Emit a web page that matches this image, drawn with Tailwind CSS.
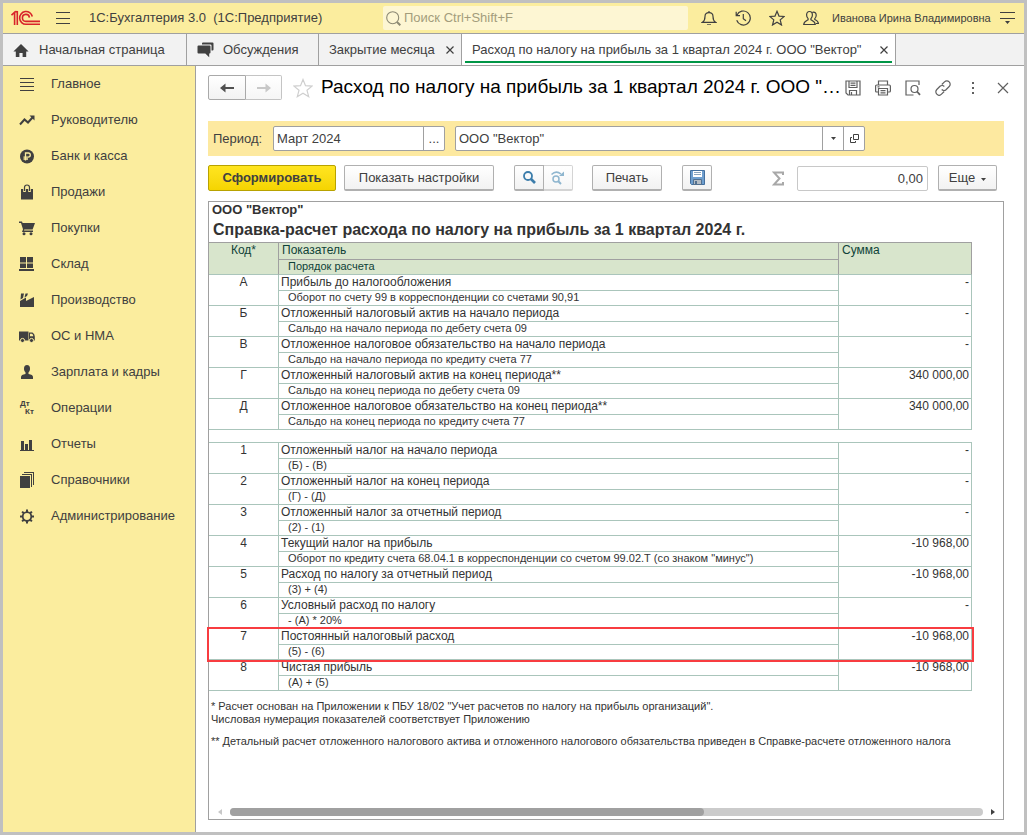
<!DOCTYPE html>
<html lang="ru">
<head>
<meta charset="utf-8">
<meta name="viewport" content="width=device-width, initial-scale=1">
<title>1С:Бухгалтерия 3.0</title>
<script src="https://cdn.jsdelivr.net/npm/@tailwindcss/browser@4"></script>
</head>
<body class="flex min-h-screen flex-col border-3 border-[#c0c0c0] bg-white font-['Liberation_Sans',Arial,sans-serif] text-[13px] text-[#404040]">

<header class="flex h-[31px] shrink-0 items-center border-b border-[#a0a0a0] bg-[#fbed9e]">
  <svg class="ml-2 h-[16px] w-[30px] shrink-0" viewBox="0 0 30 16" fill="none" stroke="#d8232a" stroke-width="1.6" role="img" aria-label="1С">
    <path d="M0.5 5.2L3.6 2.400V15M6.300 1V15M3.200 2.200L6.300 1.400" />
    <path d="M21.300 6.500A6.400 6.400 0 1 0 15 14.300H29" />
    <path d="M18.400 7.600A3.500 3.500 0 1 0 15 11.400H29" />
  </svg>
  <button type="button" aria-label="Меню" class="ml-[15px] flex h-[12px] w-[14px] flex-col justify-between">
    <span class="h-px w-full bg-[#404040]"></span><span class="h-px w-full bg-[#404040]"></span><span class="h-px w-full bg-[#404040]"></span>
  </button>
  <div class="ml-[19px] w-[294px] whitespace-pre">1С:Бухгалтерия 3.0  (1С:Предприятие)</div>
  <label class="flex h-6 flex-1 items-center rounded-xs bg-[#fdf6d3] pl-[3px]">
    <svg class="h-[15px] w-[15px]" viewBox="0 0 15 15" fill="none" stroke="#8c8974"><circle cx="6.7" cy="6.7" r="6" stroke-width="1.1"/><path d="M11 11l3.3 3.3" stroke-width="2"/></svg>
    <input type="search" aria-label="Поиск" placeholder="Поиск Ctrl+Shift+F" class="ml-[3px] min-w-0 flex-1 bg-transparent outline-none placeholder:text-[#a39d7c]">
  </label>
  <div class="ml-[13px] flex items-center gap-[18px]">
    <button type="button" aria-label="Уведомления"><svg class="block h-4 w-4" viewBox="0 0 16 16" fill="none" stroke="#404040" stroke-width="1.2"><path d="M1.5 12.3C3.5 11 4 9.500 4 6.500C4 4 5.500 2.600 8 2.600S12 4 12 6.500C12 9.500 12.500 11 14.500 12.300Z"/><path d="M8 1V2.600" /><path d="M6 14.300H10V15H6Z" fill="#404040" stroke="none"/></svg></button>
    <button type="button" aria-label="История"><svg class="block h-4 w-4" viewBox="0 0 16 16" fill="none" stroke="#404040" stroke-width="1.2"><path d="M1.900 5.200A7 7 0 1 1 1.700 10.300M1.200 1.800V5.600H5M8.300 4V8.600L11 10.800"/></svg></button>
    <button type="button" aria-label="Избранное"><svg class="block h-4 w-4" viewBox="0 0 16 16" fill="none" stroke="#404040" stroke-width="1.200"><path d="M8 1.300L10 6.100L15.200 6.500L11.200 9.900L12.500 15L8 12.200L3.500 15L4.800 9.900L0.800 6.500L6 6.100Z"/></svg></button>
    <button type="button" aria-label="Пользователь"><svg class="block h-4 w-4" viewBox="0 0 16 16" fill="none" stroke="#404040" stroke-width="1.200"><path d="M6.500 1.500C4.500 1.500 3.600 3.100 3.600 5C3.600 6.700 4.400 8 5.100 8.700V9.800C3.500 10.700 1 11.300 0.700 14.500H12.300C12 11.300 9.500 10.700 7.900 9.800V8.700C8.700 8 9.400 6.700 9.400 5C9.400 3.100 8.500 1.500 6.500 1.500ZM9.500 2.300C12 1.700 13.200 3.200 13.200 5.200C13.200 6.700 12.500 8 11.800 8.600V9.500C13.500 10.200 15.300 11 15.400 13.500H13"/></svg></button>
  </div>
  <span class="ml-[13px] w-[154px] whitespace-nowrap text-[11px]">Иванова Ирина Владимировна</span>
  <button type="button" aria-label="Настройки" class="ml-[14px] mr-[9px]"><svg class="block h-[14px] w-[15px]" viewBox="0 0 15 14" fill="#404040"><path d="M0 1h15v1H0zM0 7h15v1H0zM5 10h5L7.500 13z"/></svg></button>
</header>

<nav aria-label="Вкладки" class="flex h-8 shrink-0 border-b border-[#a0a0a0] bg-[#f2f2f2]">
  <a href="#" class="flex w-[184px] items-center border-r border-[#a0a0a0] pl-[10px]">
    <svg class="h-[14px] w-[16px]" viewBox="0 0 16 14" fill="#404040"><path d="M8 1L15.600 8.500H13.200V14H9.600V10H6.400V14H2.800V8.500H0.400Z"/></svg>
    <span class="ml-[10px]">Начальная страница</span>
  </a>
  <a href="#" class="flex w-[132px] items-center border-r border-[#a0a0a0] pl-[10px]">
    <svg class="h-[16px] w-[17px]" viewBox="0 0 17 16" fill="#404040"><path d="M5 1.500Q5 0.500 6 0.500H15.500Q16.500 0.500 16.500 1.500V7.500Q16.500 8.500 15.500 8.500H14.500V3.500Q14.500 2.500 13.500 2.500H5Z"/><path d="M1.500 3.500H12.500Q13.500 3.500 13.500 4.500V10.500Q13.500 11.500 12.500 11.500H12.200V15.200L8.300 11.500H1.500Q0.500 11.500 0.500 10.500V4.500Q0.500 3.500 1.500 3.500Z"/></svg>
    <span class="ml-[9px]">Обсуждения</span>
  </a>
  <div class="flex w-[143px] items-center justify-between border-r border-[#a0a0a0] pl-[10px] pr-[7px]">
    <a href="#">Закрытие месяца</a>
    <button type="button" aria-label="Закрыть вкладку"><svg class="block h-2 w-2" viewBox="0 0 8 8" stroke="#404040" stroke-width="1.200"><path d="M0.500 0.500L7.500 7.500M7.500 0.500L0.500 7.500"/></svg></button>
  </div>
  <div class="flex w-[434px] border-r border-[#a0a0a0] bg-white px-[3px] pb-[2px]">
    <div class="flex flex-1 items-center justify-between border-b-2 border-[#009646] pt-1 pr-1 pl-[7px]">
      <a href="#" class="whitespace-nowrap">Расход по налогу на прибыль за 1 квартал 2024 г. ООО "Вектор"</a>
      <button type="button" aria-label="Закрыть вкладку"><svg class="block h-2 w-2" viewBox="0 0 8 8" stroke="#404040" stroke-width="1.200"><path d="M0.500 0.500L7.500 7.500M7.500 0.500L0.500 7.500"/></svg></button>
    </div>
  </div>
</nav>

<div class="flex flex-1">
  <aside class="w-[193px] shrink-0 border-r border-[#a0a0a0] bg-[#fbed9e]">
    <nav aria-label="Разделы">
      <a href="#" class="flex h-9 items-center gap-4 pl-4"><svg class="h-4 w-4" viewBox="0 0 16 16" fill="#404040"><path d="M1 2h14v1H1zM1 6h14v1H1zM1 10h14v1H1zM1 14h14v1H1z"/></svg>Главное</a>
      <a href="#" class="flex h-9 items-center gap-4 pl-4"><svg class="h-4 w-4" viewBox="0 0 16 16" fill="none" stroke="#404040" stroke-width="2"><path d="M1 12.500L5.500 7.500L9 10.500L13.500 5.500"/><path d="M10.500 3.500H15.500V8.500Z" fill="#404040" stroke="none"/></svg>Руководителю</a>
      <a href="#" class="flex h-9 items-center gap-4 pl-4"><svg class="h-4 w-4" viewBox="0 0 16 16"><circle cx="8" cy="8.500" r="7" fill="#404040"/><path d="M6.500 12.500V5H9.200A2.100 2.100 0 0 1 9.200 9.200H4.500M4.500 11H9" fill="none" stroke="#fbed9e" stroke-width="1.300"/></svg>Банк и касса</a>
      <a href="#" class="flex h-9 items-center gap-4 pl-4"><svg class="h-4 w-4" viewBox="0 0 16 16"><path d="M2 5H14V15.500H2Z" fill="#404040"/><path d="M5.500 8V3.500Q5.500 1 8 1T10.500 3.500V8" fill="none" stroke="#fbed9e" stroke-width="2.600"/><path d="M5.500 7V3.500Q5.500 1 8 1T10.500 3.500V7" fill="none" stroke="#404040" stroke-width="1.200"/></svg>Продажи</a>
      <a href="#" class="flex h-9 items-center gap-4 pl-4"><svg class="h-4 w-4" viewBox="0 0 16 16" fill="#404040"><path d="M0 1.500H3L3.600 3H16L13.600 9.500H5.300L5 10.500H14V12H3L4 9.200L2 3H0Z"/><circle cx="5" cy="13.800" r="1.500"/><circle cx="12" cy="13.800" r="1.500"/></svg>Покупки</a>
      <a href="#" class="flex h-9 items-center gap-4 pl-4"><svg class="h-4 w-4" viewBox="0 0 16 16" fill="#404040"><path d="M1 1h6v5.500H1zM8 1h6v5.500H8zM1 7.500h6V12H1zM8 7.500h6V12H8zM0 13h15v2H0z"/></svg>Склад</a>
      <a href="#" class="flex h-9 items-center gap-4 pl-4"><svg class="h-4 w-4" viewBox="0 0 16 16" fill="#404040"><path d="M1 15V9L7 5.500V9L15 5V15Z"/><path d="M2 1.500H5L4 6L1.500 7.500ZM6.500 1.500H9L8 4L5.500 5.500Z"/></svg>Производство</a>
      <a href="#" class="flex h-9 items-center gap-4 pl-4"><svg class="h-4 w-4" viewBox="0 0 16 16" fill="#404040"><path d="M0 3.500H9.500V12.500H0ZM10 4.500H13.500Q15.800 6 15.800 8.500V12.500H10Z"/><path d="M11 5.800H13Q14.200 6.700 14.300 8.300H11Z" fill="#fbed9e"/><g stroke="#fbed9e"><circle cx="3.500" cy="12.500" r="2.100"/><circle cx="12.500" cy="12.500" r="2.100"/></g></svg>ОС и НМА</a>
      <a href="#" class="flex h-9 items-center gap-4 pl-4"><svg class="h-4 w-4" viewBox="0 0 16 16" fill="#404040"><ellipse cx="8" cy="4.700" rx="3" ry="3.700"/><path d="M6.500 7H9.500V10Q14 10.500 14 13V15H2V13Q2 10.500 6.500 10Z"/></svg>Зарплата и кадры</a>
      <a href="#" class="flex h-9 items-center gap-4 pl-4"><span aria-hidden="true" class="flex w-4 flex-col pl-px text-[8px] leading-[8px] font-bold"><span>Дт</span><span class="pl-[5px]">Кт</span></span>Операции</a>
      <a href="#" class="flex h-9 items-center gap-4 pl-4"><svg class="h-4 w-4" viewBox="0 0 16 16" fill="#404040"><path d="M2 5h3v9H2zM6 8h3v6H6zM10 4h3v10h-3zM1 14h14v1H1z"/></svg>Отчеты</a>
      <a href="#" class="flex h-9 items-center gap-4 pl-4"><svg class="h-4 w-4" viewBox="0 0 16 16" fill="#404040"><path d="M1 4h10v12H1zM3 2h10v13h-1V3H3zM5 0h10v13h-1V1H5z"/></svg>Справочники</a>
      <a href="#" class="flex h-9 items-center gap-4 pl-4"><svg class="h-4 w-4" viewBox="0 0 16 16" fill="none" stroke="#404040"><circle cx="8" cy="8.500" r="4.300" stroke-width="1.800"/><path d="M8 1.500V4M8 13V15.500M1 8.500H3.500M12.500 8.500H15M3.100 3.600L4.800 5.300M11.200 11.700L12.900 13.400M3.100 13.400L4.800 11.700M11.200 5.300L12.900 3.600" stroke-width="2"/></svg>Администрирование</a>
    </nav>
  </aside>

  <main class="flex min-w-0 flex-1 flex-col pt-[9px] pr-[20px] pb-[12px] pl-3">
    <div class="flex h-[25px] items-center">
      <div class="flex h-full">
        <button type="button" aria-label="Назад" class="flex w-[38px] items-center justify-center rounded-l-xs border border-[#a9a9a9] bg-linear-to-b from-white to-[#f2f2f2]"><svg class="h-[10px] w-[14px]" viewBox="0 0 14 10" fill="#505050"><path d="M0 5L5.500 0.500V4H14V6H5.500V9.500Z"/></svg></button>
        <button type="button" aria-label="Вперед" class="flex w-9 items-center justify-center rounded-r-xs border border-l-0 border-[#c4c4c4] bg-linear-to-b from-white to-[#f6f6f6]"><svg class="h-[10px] w-[14px]" viewBox="0 0 14 10" fill="#c8c8c8"><path d="M14 5L8.500 0.500V4H0V6H8.500V9.500Z"/></svg></button>
      </div>
      <button type="button" aria-label="В избранное" class="ml-[11px]"><svg class="block h-5 w-5" viewBox="0 0 20 20" fill="none" stroke="#cfcfcf" stroke-width="1.200"><path d="M10 1.500L12.500 7.700L19 8.100L14 12.300L15.700 18.700L10 15.200L4.300 18.700L6 12.300L1 8.100L7.500 7.700Z"/></svg></button>
      <h1 title="Расход по налогу на прибыль за 1 квартал 2024 г. ООО &quot;Вектор&quot;" class="ml-2 min-w-0 flex-1 text-[19px] whitespace-nowrap text-black">Расход по налогу на прибыль за 1 квартал 2024 г. ООО "…</h1>
      <div class="flex items-center gap-[14px]">
        <button type="button" aria-label="Сохранить"><svg class="block h-4 w-4" viewBox="0 0 16 16" fill="none" stroke="#606060" stroke-width="1.200"><path d="M1 1H15V15H3L1 13ZM4 1V7.500H12V1M4.500 15V10.500H11.500V15M5.500 3.200H10.500M5.500 5.300H10.500M6.500 12V15"/></svg></button>
        <button type="button" aria-label="Печать"><svg class="block h-4 w-4" viewBox="0 0 16 16" fill="none" stroke="#606060" stroke-width="1.200"><path d="M3.500 5V1H12.500V5M3.500 12H1.700Q0.600 12 0.600 11V6.200Q0.600 5 1.700 5H14.300Q15.400 5 15.400 6.200V11Q15.400 12 14.300 12H12.500M3.500 8.500H12.500V15H3.500ZM5.500 10.700H10.500M5.500 12.800H10.500M2.500 6.800H4.500"/></svg></button>
        <button type="button" aria-label="Просмотр"><svg class="block h-4 w-4" viewBox="0 0 16 16" fill="none" stroke="#606060" stroke-width="1.200"><path d="M14 5V1H1V15H8.500"/><circle cx="9.500" cy="9" r="3.500"/><path d="M12 11.500L15 14.800" stroke-width="1.800"/></svg></button>
        <button type="button" aria-label="Ссылка"><svg class="block h-4 w-4" viewBox="0 0 16 16" fill="none" stroke="#606060" stroke-width="1.200"><path d="M6.800 4.500L9.500 1.800A3 3 0 0 1 14.200 6.500L11 9.700A3 3 0 0 1 6.700 9.500M9.200 11.500L6.500 14.200A3 3 0 0 1 1.800 9.500L5 6.300A3 3 0 0 1 9.300 6.500"/></svg></button>
        <button type="button" aria-label="Ещё действия"><svg class="block h-4 w-4" viewBox="0 0 16 16" fill="#606060"><path d="M7 2h2v2H7zM7 7h2v2H7zM7 12h2v2H7z"/></svg></button>
        <button type="button" aria-label="Закрыть" class="-mr-[7px]"><svg class="block h-4 w-4" viewBox="0 0 16 16" stroke="#606060" stroke-width="1.200"><path d="M3 3L13 13M13 3L3 13"/></svg></button>
      </div>
    </div>

    <div class="mt-[21px] flex h-[35px] items-center bg-[#fde9a0] px-[5px]">
      <label for="period" class="w-[60px]">Период:</label>
      <div class="flex h-[25px] w-[172px] rounded-xs border border-[#a0a0a0] bg-white">
        <input id="period" type="text" value="Март 2024" class="min-w-0 flex-1 px-[3px] outline-none">
        <button type="button" aria-label="Выбрать период" class="w-[21px] border-l border-[#a0a0a0]">...</button>
      </div>
      <div class="mr-[134px] ml-[10px] flex h-[25px] flex-1 rounded-xs border border-[#a0a0a0] bg-white">
        <input type="text" aria-label="Организация" value="ООО &quot;Вектор&quot;" class="min-w-0 flex-1 px-[3px] outline-none">
        <button type="button" aria-label="Список" class="flex w-[21px] items-center justify-center border-l border-[#a0a0a0]"><svg class="h-[3px] w-[5px]" viewBox="0 0 5 3" fill="#404040"><path d="M0 0H5L2.500 3Z"/></svg></button>
        <button type="button" aria-label="Открыть" class="flex w-[21px] items-center justify-center border-l border-[#a0a0a0]"><svg class="h-[9px] w-[9px]" viewBox="0 0 9 9" fill="none" stroke="#404040"><path d="M3.500 0.500H8.500V5.500H3.500ZM2 3.500H0.500V8.500H5.500V7"/></svg></button>
      </div>
    </div>

    <div class="mt-[9px] flex h-[26px]">
      <button type="button" class="w-32 rounded-xs border border-[#b8a200] bg-linear-to-b from-[#ffe51f] to-[#f5d400] font-bold">Сформировать</button>
      <button type="button" class="ml-2 w-[150px] rounded-xs border border-b-2 border-[#b0b0b0] bg-linear-to-b from-white to-[#f2f2f2]">Показать настройки</button>
      <button type="button" aria-label="Найти" class="ml-5 flex w-[30px] items-center justify-center rounded-l-xs border border-b-2 border-[#b0b0b0] bg-linear-to-b from-white to-[#f2f2f2]"><svg class="h-[13px] w-[13px]" viewBox="0 0 13 13" fill="none" stroke="#3c7dab"><circle cx="5" cy="5" r="4" stroke-width="1.800"/><path d="M8 8L12 12" stroke-width="2.600"/></svg></button>
      <button type="button" aria-label="Найти далее" class="flex w-[29px] items-center justify-center rounded-r-xs border border-b-2 border-l-0 border-[#d4d4d4] bg-linear-to-b from-white to-[#f6f6f6]"><svg class="h-[14px] w-[14px]" viewBox="0 0 14 14" fill="none" stroke="#8fb6cf"><circle cx="5" cy="8" r="3" stroke-width="1.500"/><path d="M7.300 10.300L10 13" stroke-width="2"/><path d="M0.500 3.500Q5 -1 10 3" stroke-width="1.500"/><path d="M13 0.500V5H8Z" fill="#8fb6cf" stroke="none"/></svg></button>
      <button type="button" class="ml-[19px] w-[70px] rounded-xs border border-b-2 border-[#b0b0b0] bg-linear-to-b from-white to-[#f2f2f2]">Печать</button>
      <button type="button" aria-label="Сохранить отчет" class="ml-5 flex w-[30px] items-center justify-center rounded-xs border border-b-2 border-[#b0b0b0] bg-linear-to-b from-white to-[#f2f2f2]"><svg class="h-[15px] w-[15px]" viewBox="0 0 15 15"><path d="M0.500 0.500H14.500V14.500H1.500L0.500 13.500Z" fill="#6f9fcf" stroke="#44709f"/><path d="M3 1H12V7H3Z" fill="#fff"/><path d="M4 2.500H11M4 4.500H11" stroke="#8aa4bd"/><path d="M3.500 9.500H11.500V14.500H3.500Z" fill="#b4bcc4" stroke="#52708f"/><path d="M5 11H7V14H5Z" fill="#52708f"/></svg></button>
      <label for="sum" class="ml-auto flex items-center" aria-label="Сумма"><svg class="h-[15px] w-3" viewBox="0 0 12 15" fill="none" stroke="#a8a8a8" stroke-width="2"><path d="M11 4V1.500H2L7.500 7.500L2 13.500H11V11"/></svg></label>
      <input id="sum" type="text" value="0,00" class="mt-px ml-[13px] h-[25px] w-[131px] rounded-xs border border-[#c8c8c8] px-1 text-right outline-none">
      <button type="button" class="mr-[7px] ml-[10px] flex w-[59px] items-center justify-center gap-[6px] rounded-xs border border-b-2 border-[#b0b0b0] bg-linear-to-b from-white to-[#f2f2f2]">Еще<svg class="mt-1 h-[3px] w-[5px]" viewBox="0 0 5 3" fill="#404040"><path d="M0 0H5L2.500 3Z"/></svg></button>
    </div>

    <section class="mt-[10px] flex flex-1 flex-col border border-[#a0a0a0] text-[#333]">
      <p class="h-4 pl-[3px] leading-4 font-bold">ООО "Вектор"</p>
      <h2 class="h-6 pl-1 text-[16px] leading-6 font-bold">Справка-расчет расхода по налогу на прибыль за 1 квартал 2024 г.</h2>
      <div class="pr-[31px]">
      <table class="w-full table-fixed border-separate border-spacing-0 border-t border-[#a0a0a0] text-[12px] leading-[14px] [&_td]:border-[#aac5bb] [&_td]:p-0 [&_td]:align-top [&_th]:border-r-[#a0a0a0] [&_th]:border-b-[#aac5bb] [&_th]:p-0 [&_th]:align-top [&_th]:font-normal">
        <colgroup><col class="w-[70px]"><col><col class="w-[133px]"></colgroup>
        <thead class="bg-[#d8e5cc] text-[#0f4238]">
          <tr class="h-[17px]"><th rowspan="2" class="border-r border-b">Код*</th><th class="border-r text-left"><div class="h-[17px] border-b border-[#a0a0a0] pl-[3px] leading-[15px]">Показатель</div></th><th rowspan="2" class="border-r border-b text-left"><div class="pl-[3px] leading-[15px]">Сумма</div></th></tr>
          <tr class="h-[15px]"><th class="border-r border-b text-left text-[11px] leading-[12px]"><div class="pl-[9px]">Порядок расчета</div></th></tr>
        </thead>
        <tbody>
          <tr class="h-4"><td rowspan="2" class="border-r border-b text-center">А</td><td class="border-r border-b"><div class="pl-[2px]">Прибыль до налогообложения</div></td><td rowspan="2" class="border-r border-b text-right"><div class="pr-[2px]">-</div></td></tr>
          <tr class="h-[15px]"><td class="border-r border-b text-[11px] leading-[12px]"><div class="pl-[9px]">Оборот по счету 99 в корреспонденции со счетами 90,91</div></td></tr>
        </tbody>
        <tbody>
          <tr class="h-4"><td rowspan="2" class="border-r border-b text-center">Б</td><td class="border-r border-b"><div class="pl-[2px]">Отложенный налоговый актив на начало периода</div></td><td rowspan="2" class="border-r border-b text-right"><div class="pr-[2px]">-</div></td></tr>
          <tr class="h-[15px]"><td class="border-r border-b text-[11px] leading-[12px]"><div class="pl-[9px]">Сальдо на начало периода по дебету счета 09</div></td></tr>
        </tbody>
        <tbody>
          <tr class="h-4"><td rowspan="2" class="border-r border-b text-center">В</td><td class="border-r border-b"><div class="pl-[2px]">Отложенное налоговое обязательство на начало периода</div></td><td rowspan="2" class="border-r border-b text-right"><div class="pr-[2px]">-</div></td></tr>
          <tr class="h-[15px]"><td class="border-r border-b text-[11px] leading-[12px]"><div class="pl-[9px]">Сальдо на начало периода по кредиту счета 77</div></td></tr>
        </tbody>
        <tbody>
          <tr class="h-4"><td rowspan="2" class="border-r border-b text-center">Г</td><td class="border-r border-b"><div class="pl-[2px]">Отложенный налоговый актив на конец периода**</div></td><td rowspan="2" class="border-r border-b text-right"><div class="pr-[2px]">340 000,00</div></td></tr>
          <tr class="h-[15px]"><td class="border-r border-b text-[11px] leading-[12px]"><div class="pl-[9px]">Сальдо на конец периода по дебету счета 09</div></td></tr>
        </tbody>
        <tbody>
          <tr class="h-4"><td rowspan="2" class="border-r border-b text-center">Д</td><td class="border-r border-b"><div class="pl-[2px]">Отложенное налоговое обязательство на конец периода**</div></td><td rowspan="2" class="border-r border-b text-right"><div class="pr-[2px]">340 000,00</div></td></tr>
          <tr class="h-[15px]"><td class="border-r border-b text-[11px] leading-[12px]"><div class="pl-[9px]">Сальдо на конец периода по кредиту счета 77</div></td></tr>
        </tbody>
        <tbody><tr class="h-[13px]"><td colspan="3" class="border-b"></td></tr></tbody>
        <tbody>
          <tr class="h-4"><td rowspan="2" class="border-r border-b text-center">1</td><td class="border-r border-b"><div class="pl-[2px]">Отложенный налог на начало периода</div></td><td rowspan="2" class="border-r border-b text-right"><div class="pr-[2px]">-</div></td></tr>
          <tr class="h-[15px]"><td class="border-r border-b text-[11px] leading-[12px]"><div class="pl-[9px]">(Б) - (В)</div></td></tr>
        </tbody>
        <tbody>
          <tr class="h-4"><td rowspan="2" class="border-r border-b text-center">2</td><td class="border-r border-b"><div class="pl-[2px]">Отложенный налог на конец периода</div></td><td rowspan="2" class="border-r border-b text-right"><div class="pr-[2px]">-</div></td></tr>
          <tr class="h-[15px]"><td class="border-r border-b text-[11px] leading-[12px]"><div class="pl-[9px]">(Г) - (Д)</div></td></tr>
        </tbody>
        <tbody>
          <tr class="h-4"><td rowspan="2" class="border-r border-b text-center">3</td><td class="border-r border-b"><div class="pl-[2px]">Отложенный налог за отчетный период</div></td><td rowspan="2" class="border-r border-b text-right"><div class="pr-[2px]">-</div></td></tr>
          <tr class="h-[15px]"><td class="border-r border-b text-[11px] leading-[12px]"><div class="pl-[9px]">(2) - (1)</div></td></tr>
        </tbody>
        <tbody>
          <tr class="h-4"><td rowspan="2" class="border-r border-b text-center">4</td><td class="border-r border-b"><div class="pl-[2px]">Текущий налог на прибыль</div></td><td rowspan="2" class="border-r border-b text-right"><div class="pr-[2px]">-10 968,00</div></td></tr>
          <tr class="h-[15px]"><td class="border-r border-b text-[11px] leading-[12px]"><div class="pl-[9px]">Оборот по кредиту счета 68.04.1 в корреспонденции со счетом 99.02.Т (со знаком "минус")</div></td></tr>
        </tbody>
        <tbody>
          <tr class="h-4"><td rowspan="2" class="border-r border-b text-center">5</td><td class="border-r border-b"><div class="pl-[2px]">Расход по налогу за отчетный период</div></td><td rowspan="2" class="border-r border-b text-right"><div class="pr-[2px]">-10 968,00</div></td></tr>
          <tr class="h-[15px]"><td class="border-r border-b text-[11px] leading-[12px]"><div class="pl-[9px]">(3) + (4)</div></td></tr>
        </tbody>
        <tbody>
          <tr class="h-4"><td rowspan="2" class="border-r border-b text-center">6</td><td class="border-r border-b"><div class="pl-[2px]">Условный расход по налогу</div></td><td rowspan="2" class="border-r border-b text-right"><div class="pr-[2px]">-</div></td></tr>
          <tr class="h-[15px]"><td class="border-r border-b text-[11px] leading-[12px]"><div class="pl-[9px]">- (А) * 20%</div></td></tr>
        </tbody>
        <tbody class="relative">
          <tr class="h-4"><td rowspan="2" class="border-r border-b text-center">7<span class="pointer-events-none absolute -inset-[2px] border-2 border-[#f83c40]"></span></td><td class="border-r border-b"><div class="pl-[2px]">Постоянный налоговый расход</div></td><td rowspan="2" class="border-r border-b text-right"><div class="pr-[2px]">-10 968,00</div></td></tr>
          <tr class="h-[15px]"><td class="border-r border-b text-[11px] leading-[12px]"><div class="pl-[9px]">(5) - (6)</div></td></tr>
        </tbody>
        <tbody>
          <tr class="h-4"><td rowspan="2" class="border-r border-b text-center">8</td><td class="border-r border-b"><div class="pl-[2px]">Чистая прибыль</div></td><td rowspan="2" class="border-r border-b text-right"><div class="pr-[2px]">-10 968,00</div></td></tr>
          <tr class="h-[15px]"><td class="border-r border-b text-[11px] leading-[12px]"><div class="pl-[9px]">(А) + (5)</div></td></tr>
        </tbody>
      </table>
      </div>
      <div class="mt-[9px] pl-[2px] text-[11px] leading-[13px]">
        <p>* Расчет основан на Приложении к ПБУ 18/02 "Учет расчетов по налогу на прибыль организаций".</p>
        <p>Числовая нумерация показателей соответствует Приложению</p>
        <p class="mt-[9px]">** Детальный расчет отложенного налогового актива и отложенного налогового обязательства приведен в Справке-расчете отложенного налога</p>
      </div>
      <div class="mt-auto mb-[3px] flex h-2 items-center pr-2 pl-[9px]">
        <svg class="h-[6px] w-1" viewBox="0 0 4 6" fill="#c8c8c8"><path d="M4 0V6L0 3Z"/></svg>
        <div class="mx-2 h-2 flex-1 rounded-full bg-[#cbcbcb]"><div class="h-2 w-[63%] rounded-full bg-[#a0a0a0]"></div></div>
        <svg class="h-[6px] w-1" viewBox="0 0 4 6" fill="#404040"><path d="M0 0V6L4 3Z"/></svg>
      </div>
    </section>
  </main>
</div>
</body>
</html>
